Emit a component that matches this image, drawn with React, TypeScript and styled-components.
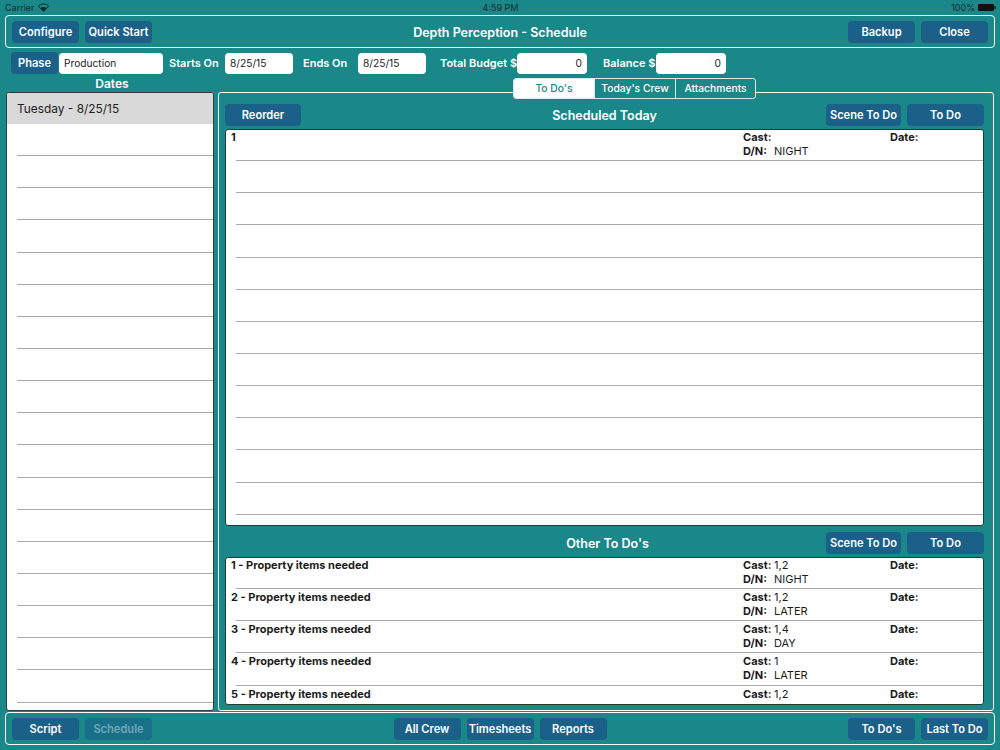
import React from 'react';
import styled, { createGlobalStyle } from 'styled-components';

const Global = createGlobalStyle`
  html, body {
    margin: 0;
    padding: 0;
    background: #1a8888;
    overflow: hidden;
  }
  * { box-sizing: border-box; }
`;

const Page = styled.div`
  width: 1000px;
  height: 750px;
  background: #1a8888;
  font-family: Inter, "Liberation Sans", sans-serif;
  color: #fff;
  display: flex;
  flex-direction: column;
  overflow: hidden;
`;

const StatusBar = styled.div`
  height: 15px;
  padding: 0 4px 0 5px;
  display: grid;
  grid-template-columns: 1fr auto 1fr;
  align-items: center;
  font-size: 9px;
  color: #0b2f2f;
`;

const StatusSide = styled.div<{ $right?: boolean }>`
  display: flex;
  align-items: center;
  gap: 3px;
  justify-content: ${p => (p.$right ? 'flex-end' : 'flex-start')};
`;

const Bar = styled.div`
  flex: none;
  height: 33px;
  margin: 0 5px;
  padding: 1px 6px 0 6px;
  border: 1px solid #fff;
  border-radius: 4px;
  display: grid;
  grid-template-columns: 1fr auto 1fr;
  align-items: center;
`;

const BtnGroup = styled.div<{ $end?: boolean }>`
  display: flex;
  gap: 6px;
  justify-content: ${p => (p.$end ? 'flex-end' : 'flex-start')};
`;

const Button = styled.div<{ $w?: number; $off?: boolean }>`
  width: ${p => p.$w ?? 67}px;
  height: 22px;
  border-radius: 4px;
  background: ${p => (p.$off ? '#1a7088' : '#1a6088')};
  color: ${p => (p.$off ? '#6fa9b5' : '#fff')};
  font-size: 11.1px;
  font-weight: 600;
  display: flex;
  align-items: center;
  justify-content: center;
  white-space: nowrap;
`;

const Title = styled.div`
  font-size: 12.5px;
  font-weight: 600;
  text-align: center;
`;

const FieldRow = styled.div`
  flex: none;
  height: 22px;
  margin-top: 4px;
  padding-left: 11px;
  display: flex;
  align-items: center;
`;

const Label = styled.div<{ $l: number; $w: number }>`
  margin-left: ${p => p.$l}px;
  width: ${p => p.$w}px;
  font-size: 11px;
  font-weight: 600;
  white-space: nowrap;
`;

const Field = styled.div<{ $w: number; $num?: boolean }>`
  width: ${p => p.$w}px;
  height: 21px;
  background: #fff;
  border-radius: 4px;
  color: #222;
  font-size: 10.2px;
  display: flex;
  align-items: center;
  padding: 0 5px;
  justify-content: ${p => (p.$num ? 'flex-end' : 'flex-start')};
`;

const PhaseField = styled(Field)`
  margin-left: 1px;
`;

const Main = styled.div`
  flex: 1;
  min-height: 0;
  margin-top: 3px;
  padding: 0 6px;
  display: grid;
  grid-template-columns: 208px 776px;
  grid-template-rows: minmax(0, 1fr);
  column-gap: 4px;
`;

const DatesColumn = styled.div`
  display: flex;
  flex-direction: column;
  min-height: 0;
`;

const DatesTitle = styled.div`
  flex: none;
  height: 15px;
  line-height: 14px;
  padding-left: 4px;
  text-align: center;
  font-size: 12px;
  font-weight: 600;
`;

const DatesList = styled.div`
  flex: 1;
  min-height: 0;
  background: #fff;
  border: 1px solid #2c3e3e;
  border-radius: 3px;
  overflow: hidden;
`;

const SelectedDate = styled.div`
  height: 31px;
  padding-left: 10px;
  background: #d9d9d9;
  color: #222;
  font-size: 11.9px;
  display: flex;
  align-items: center;
`;

const DateLine = styled.div`
  height: 32.15px;
  margin-left: 10px;
  border-bottom: 1px solid #aaa;
`;

const RightColumn = styled.div`
  display: flex;
  flex-direction: column;
  min-height: 0;
  padding-top: 1px;
`;

const Tabs = styled.div`
  position: relative;
  z-index: 1;
  flex: none;
  align-self: flex-start;
  margin-left: 295px;
  height: 21px;
  display: flex;
  border: 1px solid #d6ecec;
  border-radius: 3px;
  overflow: hidden;
  background: #1a8888;
`;

const Tab = styled.div<{ $w: number; $on?: boolean }>`
  width: ${p => p.$w}px;
  padding-bottom: 1px;
  background: ${p => (p.$on ? '#fff' : 'transparent')};
  color: ${p => (p.$on ? '#1a8888' : '#fff')};
  border-left: ${p => (p.$on ? 'none' : '1px solid #d6ecec')};
  font-size: 10.3px;
  font-weight: 500;
  display: flex;
  align-items: center;
  justify-content: center;
`;

const Panel = styled.div`
  flex: 1;
  min-height: 0;
  margin-top: -7px;
  padding: 11px 9px 5px 6px;
  border: 1px solid #fff;
  border-radius: 3px;
  display: flex;
  flex-direction: column;
`;

const SectionHead = styled.div<{ $top?: number }>`
  flex: none;
  height: 22px;
  margin-top: ${p => p.$top ?? 0}px;
  display: grid;
  grid-template-columns: 1fr auto 1fr;
  align-items: center;
`;

const SectionTitle = styled.div<{ $nudge?: number }>`
  padding-left: ${p => p.$nudge ?? 0}px;
  font-size: 12.5px;
  font-weight: 600;
  text-align: center;
`;

const List = styled.div<{ $h: number; $top: number }>`
  flex: none;
  height: ${p => p.$h}px;
  margin-top: ${p => p.$top}px;
  background: #fff;
  border: 1px solid #1f3a3a;
  border-radius: 3px;
  overflow: hidden;
  color: #1c1c1c;
`;

const Row = styled.div`
  height: 32.15px;
  margin-left: 10px;
  padding-top: 1px;
  border-bottom: 1px solid #aaa;
  &:first-child { height: 31.15px; padding-top: 0; }
  &:last-child { border-bottom: none; }
`;

const RowGrid = styled.div`
  margin-left: -5px;
  display: grid;
  grid-template-columns: 512px 147px 1fr;
  font-size: 11px;
  line-height: 14px;
`;

const RowTitle = styled.div`
  font-weight: 700;
`;

const Key = styled.span`
  display: inline-block;
  width: 31px;
  font-weight: 700;
`;

const Strong = styled.div`
  font-weight: 700;
`;

const BottomBar = styled(Bar)`
  margin-top: 1px;
  margin-bottom: 5px;
`;

const Wifi = () => (
  <svg width="11" height="9" viewBox="0 0 11 9">
    <path d="M5.5 8.5 L0.3 3 A7.5 7.5 0 0 1 10.7 3 Z" fill="none" stroke="#0b2f2f" strokeWidth="1" />
    <path d="M5.5 8.5 L2.4 5.2 A4.4 4.4 0 0 1 8.6 5.2 Z" fill="#0b2f2f" />
  </svg>
);

const Battery = () => (
  <svg width="18" height="7" viewBox="0 0 18 7">
    <rect x="0" y="0" width="16" height="7" rx="1" fill="#111" />
    <rect x="16.4" y="2" width="1.4" height="3" fill="#111" />
  </svg>
);

type Item = { title: string; cast: string; dn: string };

const otherItems: Item[] = [
  { title: '1 - Property items needed', cast: '1,2', dn: 'NIGHT' },
  { title: '2 - Property items needed', cast: '1,2', dn: 'LATER' },
  { title: '3 - Property items needed', cast: '1,4', dn: 'DAY' },
  { title: '4 - Property items needed', cast: '1', dn: 'LATER' },
  { title: '5 - Property items needed', cast: '1,2', dn: '' },
];

const ItemRow = ({ title, cast, dn }: Item) => (
  <Row>
    <RowGrid>
      <RowTitle>{title}</RowTitle>
      <div>
        <div><Key>Cast:</Key>{cast}</div>
        {dn && <div><Key>D/N:</Key>{dn}</div>}
      </div>
      <Strong>Date:</Strong>
    </RowGrid>
  </Row>
);

const App = () => {
  return (
    <Page>
      <Global />
      <StatusBar>
        <StatusSide>Carrier <Wifi /></StatusSide>
        <div>4:59 PM</div>
        <StatusSide $right>100% <Battery /></StatusSide>
      </StatusBar>

      <Bar>
        <BtnGroup>
          <Button>Configure</Button>
          <Button>Quick Start</Button>
        </BtnGroup>
        <Title>Depth Perception - Schedule</Title>
        <BtnGroup $end>
          <Button>Backup</Button>
          <Button>Close</Button>
        </BtnGroup>
      </Bar>

      <FieldRow>
        <Button $w={47}>Phase</Button>
        <PhaseField $w={104}>Production</PhaseField>
        <Label $l={6} $w={56}>Starts On</Label>
        <Field $w={68}>8/25/15</Field>
        <Label $l={10} $w={55}>Ends On</Label>
        <Field $w={68}>8/25/15</Field>
        <Label $l={14} $w={77}>Total Budget $</Label>
        <Field $w={70} $num>0</Field>
        <Label $l={16} $w={53}>Balance $</Label>
        <Field $w={70} $num>0</Field>
      </FieldRow>

      <Main>
        <DatesColumn>
          <DatesTitle>Dates</DatesTitle>
          <DatesList>
            <SelectedDate>Tuesday - 8/25/15</SelectedDate>
            {Array.from({ length: 19 }, (_, i) => <DateLine key={i} />)}
          </DatesList>
        </DatesColumn>

        <RightColumn>
          <Tabs>
            <Tab $w={80} $on>To Do's</Tab>
            <Tab $w={81}>Today's Crew</Tab>
            <Tab $w={80}>Attachments</Tab>
          </Tabs>
          <Panel>
            <SectionHead>
              <Button $w={76}>Reorder</Button>
              <SectionTitle>Scheduled Today</SectionTitle>
              <BtnGroup $end>
                <Button $w={75}>Scene To Do</Button>
                <Button $w={77}>To Do</Button>
              </BtnGroup>
            </SectionHead>
            <List $h={397} $top={3}>
              <Row>
                <RowGrid>
                  <RowTitle>1</RowTitle>
                  <div>
                    <Strong>Cast:</Strong>
                    <div><Key>D/N:</Key>NIGHT</div>
                  </div>
                  <Strong>Date:</Strong>
                </RowGrid>
              </Row>
              {Array.from({ length: 12 }, (_, i) => <Row key={i} />)}
            </List>
            <SectionHead $top={6}>
              <div />
              <SectionTitle $nudge={6}>Other To Do's</SectionTitle>
              <BtnGroup $end>
                <Button $w={75}>Scene To Do</Button>
                <Button $w={77}>To Do</Button>
              </BtnGroup>
            </SectionHead>
            <List $h={148} $top={3}>
              {otherItems.map(item => <ItemRow key={item.title} {...item} />)}
            </List>
          </Panel>
        </RightColumn>
      </Main>

      <BottomBar>
        <BtnGroup>
          <Button>Script</Button>
          <Button $off>Schedule</Button>
        </BtnGroup>
        <BtnGroup>
          <Button>All Crew</Button>
          <Button>Timesheets</Button>
          <Button>Reports</Button>
        </BtnGroup>
        <BtnGroup $end>
          <Button>To Do's</Button>
          <Button>Last To Do</Button>
        </BtnGroup>
      </BottomBar>
    </Page>
  );
};

export default App;
